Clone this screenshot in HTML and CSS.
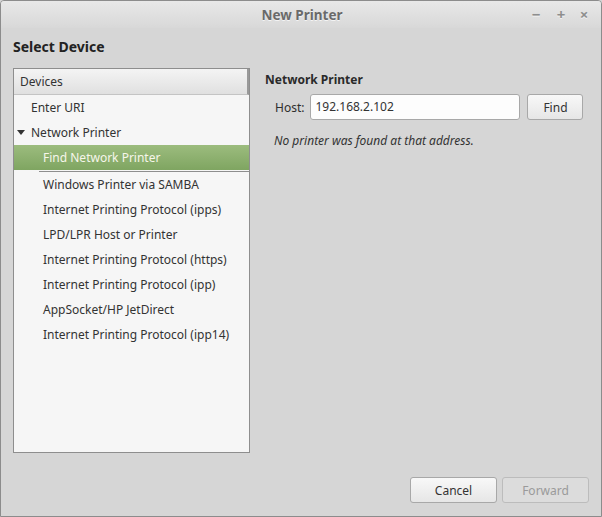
FILE: index.html
```html
<!DOCTYPE html>
<html lang="en">
<head>
  <meta charset="UTF-8">
  <title>New Printer</title>
  <link rel="stylesheet" href="styles.css">
</head>
<body>
  <div class="window">
    <div class="titlebar">
      <span class="title">New Printer</span>
      <div class="controls">
        <span class="ctl">&minus;</span>
        <span class="ctl">+</span>
        <span class="ctl">&times;</span>
      </div>
    </div>

    <div class="content">
      <h1 class="page-title">Select Device</h1>

      <div class="main">
        <div class="device-list">
          <div class="list-header">Devices</div>
          <div class="row lvl1">Enter URI</div>
          <div class="row lvl1 parent"><span class="arrow"></span>Network Printer</div>
          <div class="row lvl2 selected">Find Network Printer</div>
          <div class="drop-line"></div>
          <div class="row lvl2">Windows Printer via SAMBA</div>
          <div class="row lvl2">Internet Printing Protocol (ipps)</div>
          <div class="row lvl2">LPD/LPR Host or Printer</div>
          <div class="row lvl2">Internet Printing Protocol (https)</div>
          <div class="row lvl2">Internet Printing Protocol (ipp)</div>
          <div class="row lvl2">AppSocket/HP JetDirect</div>
          <div class="row lvl2">Internet Printing Protocol (ipp14)</div>
        </div>

        <div class="details">
          <div class="section-title">Network Printer</div>
          <div class="host-row">
            <label class="host-label">Host:</label>
            <div class="entry">192.168.2.102</div>
            <button class="btn find">Find</button>
          </div>
          <p class="message">No printer was found at that address.</p>
        </div>
      </div>

      <div class="actions">
        <button class="btn action">Cancel</button>
        <button class="btn action disabled">Forward</button>
      </div>
    </div>
  </div>
</body>
</html>
```

FILE: styles.css
```css
body {
  margin: 0;
  font-family: "Noto Sans", "DejaVu Sans", sans-serif;
  font-size: 12px;
  color: #2e2e2e;
  background-color: #d6d6d6;
}

.window {
  width: 602px;
  height: 517px;
  box-sizing: border-box;
  border: 1px solid #8c8c8c;
  border-radius: 4px 4px 0 0;
  background-color: #d6d6d6;
  display: flex;
  flex-direction: column;
  overflow: hidden;
}

.titlebar {
  height: 27px;
  flex-shrink: 0;
  display: flex;
  align-items: center;
  justify-content: center;
  position: relative;
  background: linear-gradient(#e8e8e8, #d8d8d8);
}

.title {
  font-weight: bold;
  font-size: 13.5px;
  color: #6a6a6a;
  text-shadow: 0 1px 0 #f4f4f4;
  margin-left: 2px;
}

.controls {
  position: absolute;
  right: 10px;
  top: 3px;
  display: flex;
  gap: 9px;
}

.ctl {
  width: 14px;
  text-align: center;
  font-size: 15px;
  font-weight: bold;
  color: #8e8e8e;
  text-shadow: 0 1px 0 #f2f2f2;
}

.ctl:first-child {
  margin-right: 2px;
}

.content {
  flex: 1;
  display: flex;
  flex-direction: column;
  padding: 0 12px 13px 12px;
}

.page-title {
  margin: 9px 0 12px 0;
  font-size: 14px;
  font-weight: bold;
  color: #222;
}

.main {
  display: flex;
  flex: 1;
}

.device-list {
  width: 235px;
  height: 383px;
  border: 1px solid #8e8e8e;
  background-color: #f6f6f6;
  flex-shrink: 0;
}

.list-header {
  height: 25px;
  line-height: 25px;
  padding-left: 6px;
  background: linear-gradient(#f4f4f4, #e0e0e0);
  border-bottom: 1px solid #c4c4c4;
  border-right: 2px solid #999;
  color: #333;
}

.row {
  height: 25px;
  line-height: 25px;
  white-space: nowrap;
  color: #333;
}

.lvl1 {
  padding-left: 17px;
}

.lvl2 {
  padding-left: 29px;
}

.parent {
  padding-left: 3px;
  display: flex;
  align-items: center;
}

.arrow {
  width: 0;
  height: 0;
  border-left: 4px solid transparent;
  border-right: 4px solid transparent;
  border-top: 5px solid #333;
  margin: 0 6px 0 0;
}

.selected {
  background: linear-gradient(#9cbc7e, #7fa561);
  color: #f6f6ea;
}

.drop-line {
  height: 1px;
  margin: 1px 0 0 25px;
  background-color: #8e8e8e;
}

.details {
  flex: 1;
  padding-left: 15px;
}

.section-title {
  font-weight: bold;
  color: #2a2a2a;
  margin-top: 3px;
  height: 18px;
}

.host-row {
  display: flex;
  align-items: center;
  margin-top: 5px;
  padding-left: 10px;
}

.host-label {
  margin-right: 6px;
}

.entry {
  width: 204px;
  height: 24px;
  line-height: 24px;
  border: 1px solid #a8a8a8;
  border-radius: 3px;
  background-color: #fdfdfd;
  padding-left: 4px;
  color: #333;
}

.btn {
  font-family: inherit;
  font-size: 12px;
  color: #333;
  height: 26px;
  border: 1px solid #a8a8a8;
  border-radius: 3px;
  background: linear-gradient(#f8f8f8, #e6e6e6);
  padding: 0;
}

.find {
  width: 56px;
  margin-left: 7px;
}

.message {
  margin: 12px 0 0 9px;
  font-style: italic;
  color: #333;
}

.actions {
  display: flex;
  justify-content: flex-end;
  gap: 5px;
  margin-top: 21px;
}

.action {
  width: 87px;
}

.disabled {
  color: #9a9a9a;
  background: #dcdcdc;
  border-color: #bcbcbc;
}
```
